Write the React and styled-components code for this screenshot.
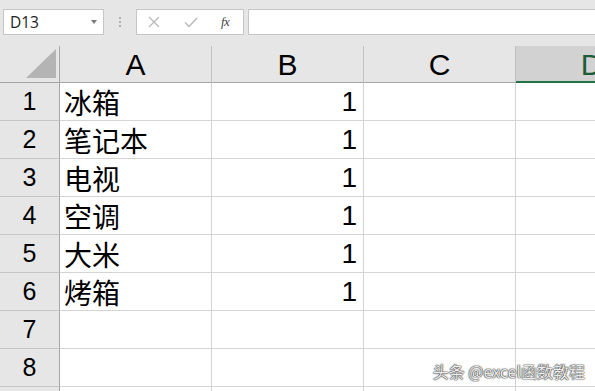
import React from "react";
import styled, { createGlobalStyle } from "styled-components";

const GlobalStyle = createGlobalStyle`
  html, body { margin: 0; padding: 0; background: #e6e6e6; overflow: hidden; }
  body { width: 595px; height: 391px; }
`;

const Page = styled.div`
  position: relative;
  width: 595px;
  height: 391px;
  overflow: hidden;
  background: #e6e6e6;
`;

const FormulaBar = styled.div`
  display: flex;
  align-items: stretch;
  height: 26px;
  padding: 9px 0 11px 3px;
`;

const NameBox = styled.div`
  box-sizing: border-box;
  width: 101px;
  background: #fff;
  border: 1px solid #c6c6c6;
  display: flex;
  align-items: center;
  justify-content: space-between;
  padding: 0 6px 0 6px;
  font-family: "Open Sans", "Liberation Sans", sans-serif;
  font-size: 15.5px;
  color: #222;
`;

const Arrow = styled.span`
  width: 0;
  height: 0;
  border-left: 3.5px solid transparent;
  border-right: 3.5px solid transparent;
  border-top: 4px solid #7a7a7a;
`;

const Grip = styled.div`
  width: 32px;
  display: flex;
  flex-direction: column;
  align-items: center;
  justify-content: center;
  gap: 2px;
`;

const GripDot = styled.span`
  width: 2px;
  height: 2px;
  background: #b0b0b0;
`;

const FxBox = styled.div`
  box-sizing: border-box;
  width: 108px;
  background: #fff;
  border: 1px solid #c6c6c6;
  display: flex;
  align-items: center;
  padding-left: 11px;
`;

const IconSlot = styled.span`
  width: ${(p) => p.$w}px;
  display: flex;
  align-items: center;
  justify-content: flex-start;
`;

const Fx = styled.span`
  font-family: "Liberation Serif", serif;
  font-style: italic;
  font-size: 13px;
  color: #444;
  letter-spacing: -0.5px;
`;

const FormulaInput = styled.div`
  box-sizing: border-box;
  flex: 1;
  margin-left: 4px;
  background: #fff;
  border: 1px solid #c6c6c6;
  border-right: none;
`;

const Sheet = styled.div`
  display: grid;
  grid-template-columns: 60px 152px 152px 152px 152px;
  grid-template-rows: 37px;
  grid-auto-rows: 38px;
`;

const Corner = styled.div`
  box-sizing: border-box;
  background: #e6e6e6;
  border-right: 1px solid #a6a6a6;
  border-bottom: 1px solid #a6a6a6;
  display: flex;
  align-items: flex-end;
  justify-content: flex-end;
  padding: 0 3px 4px 0;
`;

const ColHeader = styled.div`
  box-sizing: border-box;
  background: ${(p) => (p.$selected ? "#d2d2d2" : "#e6e6e6")};
  border-right: 1px solid #c0c0c0;
  border-bottom: ${(p) => (p.$selected ? "2px solid #217346" : "1px solid #a6a6a6")};
  display: flex;
  align-items: center;
  justify-content: center;
  font-family: "Liberation Sans", Arial, sans-serif;
  font-size: 30px;
  color: ${(p) => (p.$selected ? "#1e5b38" : "#000")};
  padding-top: 2px;
`;

const RowHeader = styled.div`
  box-sizing: border-box;
  background: #e6e6e6;
  border-right: 1px solid #a6a6a6;
  border-bottom: 1px solid #c6c6c6;
  display: flex;
  align-items: center;
  justify-content: center;
  font-family: "Liberation Sans", Arial, sans-serif;
  font-size: 25px;
  color: #000;
`;

const Cell = styled.div`
  box-sizing: border-box;
  background: #fff;
  border-right: 1px solid #d4d4d4;
  border-bottom: 1px solid #d4d4d4;
  display: flex;
  align-items: center;
  justify-content: ${(p) => (p.$align === "right" ? "flex-end" : "flex-start")};
  padding: 0 6px 0 4px;
  font-family: "Liberation Sans", "Noto Sans CJK SC", sans-serif;
  font-size: 28px;
  color: #000;
  white-space: nowrap;
  overflow: hidden;
`;

const Watermark = styled.div`
  position: absolute;
  right: 10px;
  bottom: 8px;
  font-family: "Noto Sans CJK SC", "Liberation Sans", sans-serif;
  font-size: 16px;
  color: #ececec;
  text-shadow: 0 0 1px #333, 0 0 1px #333, 0 0 2px #666;
`;

const data = [
  ["冰箱", "1"],
  ["笔记本", "1"],
  ["电视", "1"],
  ["空调", "1"],
  ["大米", "1"],
  ["烤箱", "1"],
  ["", ""],
  ["", ""],
];

export default function App() {
  return (
    <Page>
      <GlobalStyle />
      <FormulaBar>
        <NameBox>
          <span>D13</span>
          <Arrow />
        </NameBox>
        <Grip>
          <GripDot />
          <GripDot />
          <GripDot />
        </Grip>
        <FxBox>
          <IconSlot $w={36}>
            <svg width="12" height="12" viewBox="0 0 12 12">
              <path d="M1 1 L11 11 M11 1 L1 11" stroke="#b8b8b8" strokeWidth="1.2" fill="none" />
            </svg>
          </IconSlot>
          <IconSlot $w={37}>
            <svg width="14" height="11" viewBox="0 0 14 11">
              <path d="M1 5.5 L5 9.5 L13 1" stroke="#b8b8b8" strokeWidth="1.4" fill="none" />
            </svg>
          </IconSlot>
          <IconSlot $w={20}>
            <Fx>fx</Fx>
          </IconSlot>
        </FxBox>
        <FormulaInput />
      </FormulaBar>
      <Sheet>
        <Corner>
          <svg width="30" height="29" viewBox="0 0 30 29">
            <polygon points="30,0 30,29 0,29" fill="#b4b4b4" />
          </svg>
        </Corner>
        <ColHeader>A</ColHeader>
        <ColHeader>B</ColHeader>
        <ColHeader>C</ColHeader>
        <ColHeader $selected>D</ColHeader>
        {data.map((row, i) => (
          <React.Fragment key={i}>
            <RowHeader>{i + 1}</RowHeader>
            <Cell>{row[0]}</Cell>
            <Cell $align="right">{row[1]}</Cell>
            <Cell />
            <Cell />
          </React.Fragment>
        ))}
        <RowHeader />
        <Cell />
        <Cell />
        <Cell />
        <Cell />
      </Sheet>
      <Watermark>头条 @excel函数教程</Watermark>
    </Page>
  );
}
